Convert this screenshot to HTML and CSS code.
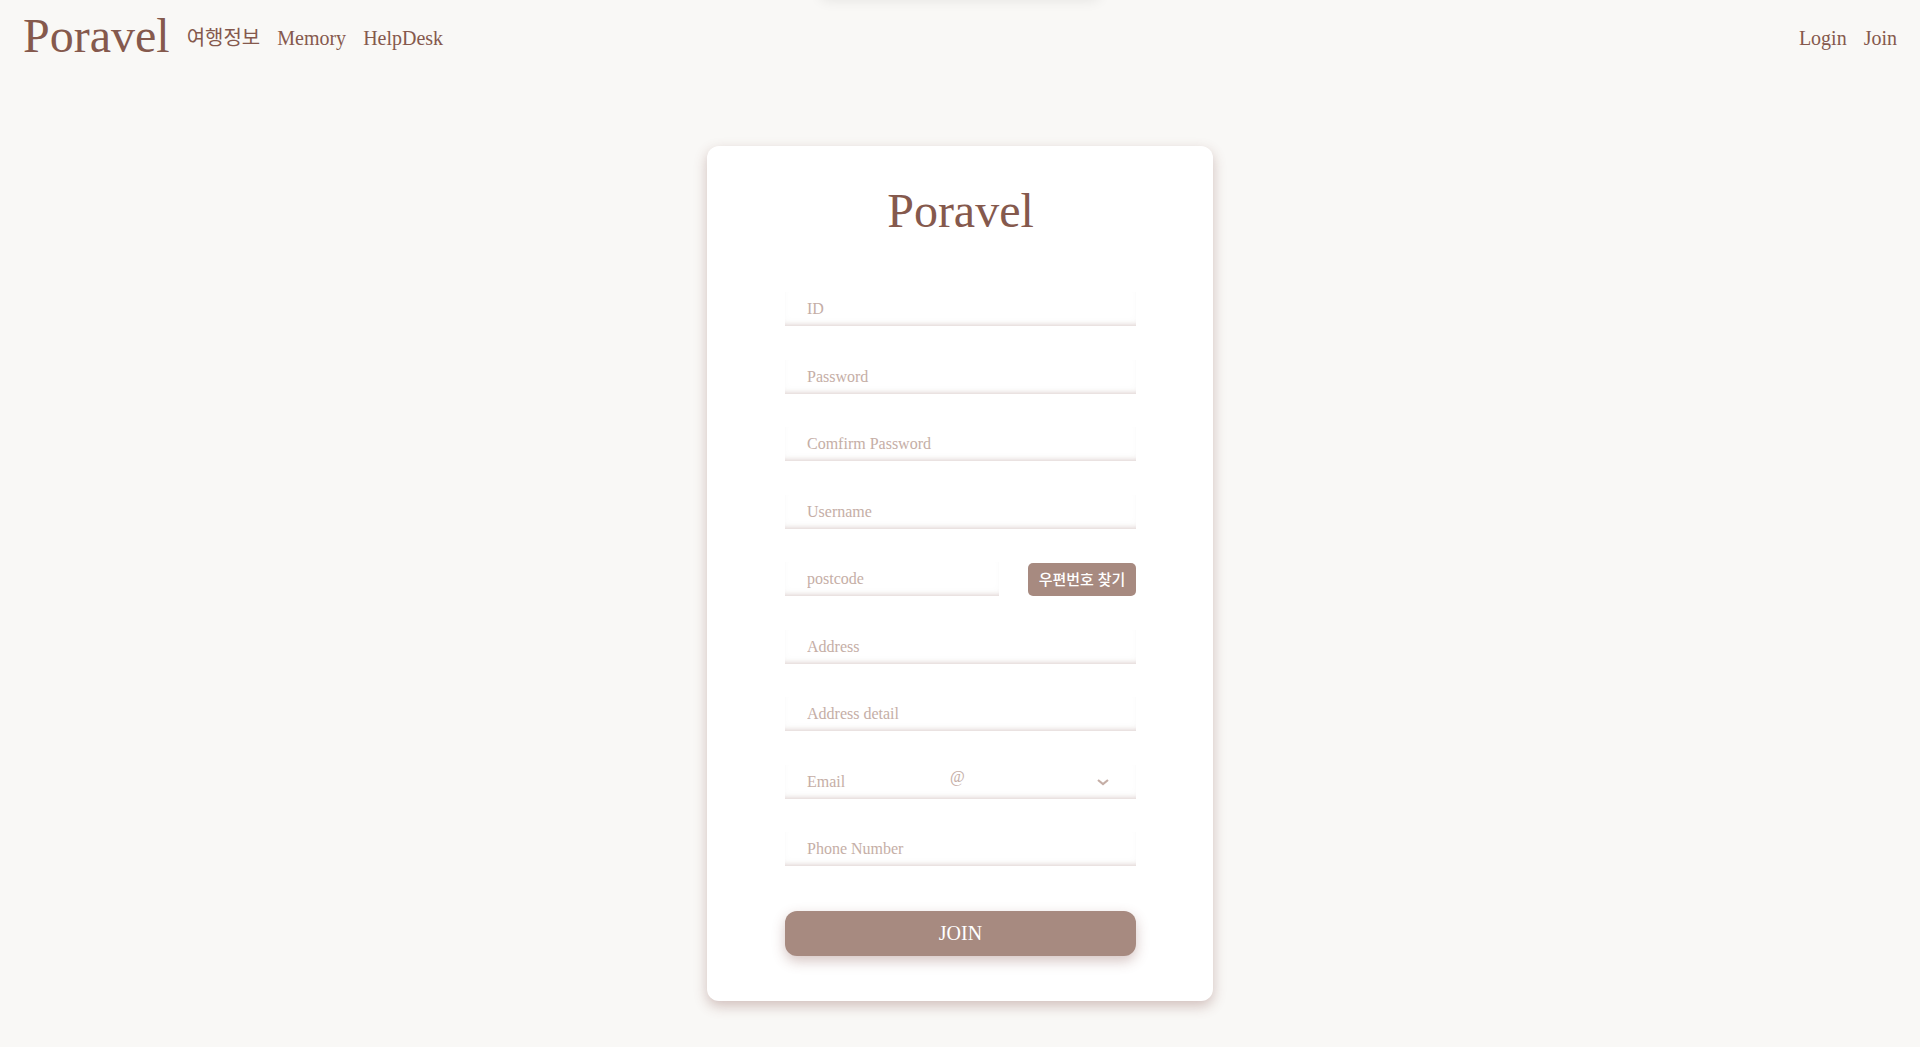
FILE: index.html
```html
<!DOCTYPE html>
<html lang="ko">
<head>
<meta charset="utf-8">
<meta name="viewport" content="width=device-width, initial-scale=1">
<title>Poravel</title>
<link rel="stylesheet" href="styles.css">
</head>
<body>
<header class="topbar">
  <nav class="nav">
    <a class="brand logo" href="#">Poravel</a>
    <a href="#">여행정보</a>
    <a href="#">Memory</a>
    <a href="#">HelpDesk</a>
  </nav>
  <nav class="nav">
    <a href="#">Login</a>
    <a href="#">Join</a>
  </nav>
</header>
<main class="page">
  <form class="card">
    <h1 class="brand title">Poravel</h1>
    <div class="fields">
      <input class="field" type="text" placeholder="ID" aria-label="ID">
      <input class="field" type="password" placeholder="Password" aria-label="Password">
      <input class="field" type="password" placeholder="Comfirm Password" aria-label="Comfirm Password">
      <input class="field" type="text" placeholder="Username" aria-label="Username">
      <div class="postcode">
        <input class="field" type="text" placeholder="postcode" aria-label="postcode">
        <button class="find" type="button">우편번호 찾기</button>
      </div>
      <input class="field" type="text" placeholder="Address" aria-label="Address">
      <input class="field" type="text" placeholder="Address detail" aria-label="Address detail">
      <div class="field email">
        <input class="email-id" type="text" placeholder="Email" aria-label="Email">
        <span class="at">@</span>
        <div class="domain">
          <select class="domain-select" aria-label="Email domain"><option></option></select>
          <svg class="chevron" width="12" height="8" viewBox="0 0 12 8" fill="none" stroke="currentColor" stroke-width="2.2" aria-hidden="true"><path d="M1 2 6 6l5-4"/></svg>
        </div>
      </div>
      <input class="field" type="tel" placeholder="Phone Number" aria-label="Phone Number">
    </div>
    <button class="join" type="submit">JOIN</button>
  </form>
</main>
</body>
</html>
```
FILE: styles.css
```css
* {
  box-sizing: border-box;
}

body {
  margin: 0;
  background: #f9f8f6;
  color: #85594d;
  font-family: "Liberation Serif", "Noto Sans CJK KR", serif;
  font-size: 20px;
  line-height: 24px;
}

body::before {
  content: "";
  position: absolute;
  top: -20px;
  left: 50%;
  width: 280px;
  height: 16px;
  border-radius: 8px;
  transform: translateX(-50%);
  box-shadow: 0 4px 14px rgba(0, 0, 0, 0.09);
}

a {
  color: inherit;
  text-decoration: none;
}

input,
select,
button {
  margin: 0;
  border: 0;
  color: inherit;
  font-family: inherit;
}

.topbar {
  display: flex;
  justify-content: space-between;
  align-items: center;
  padding: 8px 23px;
}

.nav {
  display: flex;
  align-items: center;
  gap: 17px;
}

.brand {
  font-size: 48px;
  font-weight: 400;
  line-height: 60px;
}

.logo {
  padding-bottom: 4px;
  line-height: 56px;
}

.page {
  display: flex;
  justify-content: center;
  padding: 70px 16px 46px;
}

.card {
  display: flex;
  flex-direction: column;
  width: 100%;
  max-width: 506px;
  padding: 35px 77px 45px 78px;
  border-radius: 12px;
  background: #fff;
  box-shadow: 0 5px 13px rgba(125, 70, 65, 0.32);
}

.title {
  margin: 0 0 51px;
  text-align: center;
}

.fields {
  display: grid;
  align-content: space-between;
  min-height: 574px;
}

.field {
  width: 100%;
  min-width: 0;
  height: 34px;
  padding: 0 22px;
  background: transparent;
  font-size: 16px;
  box-shadow: inset 0 -5px 5px -4px rgba(125, 60, 50, 0.22), inset 0 -5px 7px rgba(0, 0, 0, 0.02);
}

.field::placeholder,
.email-id::placeholder {
  color: #c5aea6;
  opacity: 1;
}

.postcode {
  display: flex;
  align-items: flex-end;
  gap: 29px;
}

.find {
  flex: 0 0 108px;
  height: 33px;
  padding: 0 0 2px;
  border-radius: 5px;
  background: #a78a80;
  color: #fff;
  font-size: 15px;
  font-weight: 500;
}

.email {
  display: flex;
  align-items: center;
  color: #c5aea6;
}

.email-id {
  flex: 0 0 143px;
  min-width: 0;
  height: 34px;
  padding: 0;
  background: transparent;
  font-size: 16px;
}

.at {
  align-self: flex-start;
  font-size: 16px;
}

.domain {
  display: flex;
  flex: 1;
  align-items: center;
  justify-content: flex-end;
}

.domain-select {
  flex: 1;
  min-width: 0;
  height: 32px;
  appearance: none;
  background: transparent;
}

.chevron {
  margin-right: 5px;
}

.join {
  height: 45px;
  margin-top: 45px;
  border-radius: 12px;
  background: #a78a80;
  color: #fff;
  font-size: 20px;
  box-shadow: 0 5px 13px rgba(125, 70, 65, 0.32);
}
```
